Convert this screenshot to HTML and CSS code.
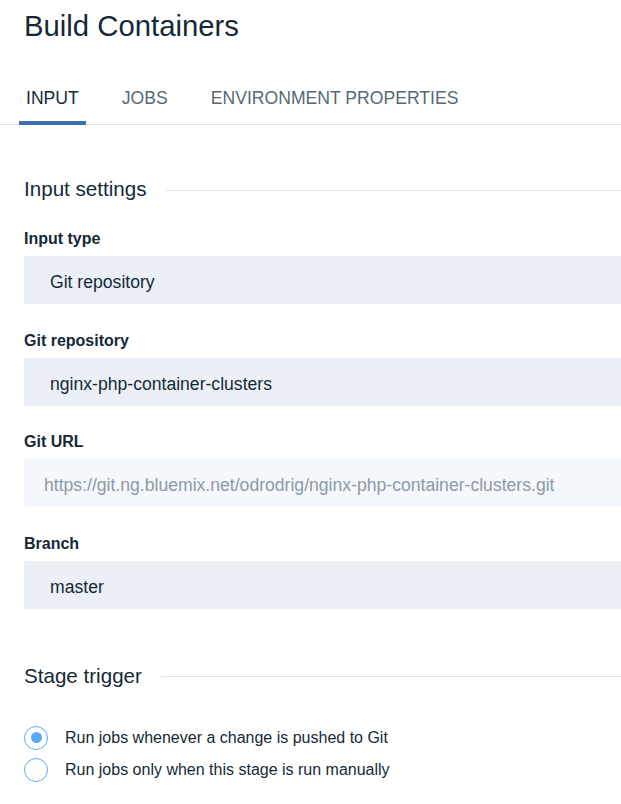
FILE: index.html
```html
<!DOCTYPE html>
<html lang="en">
<head>
<meta charset="utf-8">
<title>Build Containers</title>
<link rel="stylesheet" href="styles.css">
</head>
<body>
<div class="page">
  <h1 class="title">Build Containers</h1>
  <nav class="tabs">
    <span class="tab active">INPUT</span>
    <span class="tab">JOBS</span>
    <span class="tab">ENVIRONMENT PROPERTIES</span>
  </nav>

  <section class="section first">
    <h2 class="section-title"><span>Input settings</span><span class="rule"></span></h2>
    <div class="field">
      <div class="label">Input type</div>
      <div class="box">Git repository</div>
    </div>
    <div class="field">
      <div class="label">Git repository</div>
      <div class="box">nginx-php-container-clusters</div>
    </div>
    <div class="field">
      <div class="label">Git URL</div>
      <div class="box readonly">https://git.ng.bluemix.net/odrodrig/nginx-php-container-clusters.git</div>
    </div>
    <div class="field">
      <div class="label">Branch</div>
      <div class="box">master</div>
    </div>
  </section>

  <section class="section second">
    <h2 class="section-title"><span>Stage trigger</span><span class="rule"></span></h2>
    <div class="radios">
      <label class="radio"><span class="circle checked"></span><span>Run jobs whenever a change is pushed to Git</span></label>
      <label class="radio"><span class="circle"></span><span>Run jobs only when this stage is run manually</span></label>
    </div>
  </section>
</div>
</body>
</html>
```

FILE: styles.css
```css
html, body {
  margin: 0;
  padding: 0;
  background: #ffffff;
}

body {
  font-family: "Liberation Sans", Arial, sans-serif;
  color: #152935;
}

.page {
  padding-top: 8px;
}

.title {
  margin: 0 0 0 24px;
  font-size: 29.3px;
  line-height: 36px;
  font-weight: 400;
  color: #152935;
}

.tabs {
  display: flex;
  gap: 29px;
  margin-top: 44px;
  padding-left: 19px;
  border-bottom: 1px solid #dfe3e6;
}

.tab {
  font-size: 17.6px;
  line-height: 20px;
  padding: 0 7px 13px;
  border-bottom: 4px solid transparent;
  margin-bottom: -1px;
  color: #5a6872;
}

.tab.active {
  color: #152935;
  border-bottom-color: #3d70b2;
}

.section {
  padding-left: 24px;
}

.section.first {
  margin-top: 52px;
}

.section.second {
  margin-top: 55px;
}

.section-title {
  display: flex;
  align-items: center;
  gap: 19px;
  margin: 0;
  font-size: 20.6px;
  line-height: 24px;
  font-weight: 400;
  color: #152935;
}

.section-title .rule {
  flex: 1;
  height: 1px;
  background: #dfe3e6;
  margin-top: 2px;
}

.field {
  margin-top: 27.6px;
}

.section-title + .field {
  margin-top: 29px;
}

.label {
  font-size: 16px;
  line-height: 18px;
  font-weight: 700;
  color: #152935;
  margin-bottom: 8px;
}

.box {
  box-sizing: border-box;
  height: 48px;
  line-height: 43px;
  padding-top: 5px;
  padding-left: 26px;
  background: #ebf0f7;
  font-size: 17.6px;
  color: #152935;
  white-space: nowrap;
  overflow: hidden;
}

.box.readonly {
  padding-left: 20px;
  background: #f4f7fb;
  color: #8c9ba5;
}

.radios {
  margin-top: 34px;
  display: flex;
  flex-direction: column;
}

.radio {
  display: flex;
  align-items: center;
  height: 32px;
  gap: 17px;
  font-size: 16px;
  color: #152935;
}

.circle {
  box-sizing: border-box;
  width: 24px;
  height: 24px;
  border: 1px solid #5aaafa;
  border-radius: 50%;
  display: flex;
  align-items: center;
  justify-content: center;
  background: #fff;
}

.circle.checked::after {
  content: "";
  width: 11px;
  height: 11px;
  border-radius: 50%;
  background: #5aaafa;
}
```
